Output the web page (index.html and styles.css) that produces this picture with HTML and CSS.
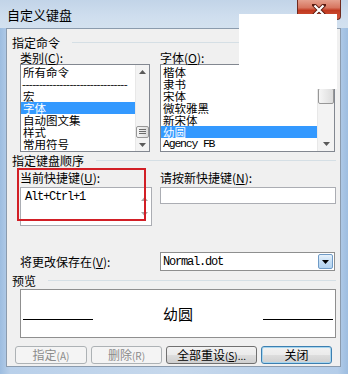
FILE: index.html
```html
<!DOCTYPE html>
<html lang="zh-CN">
<head>
    <meta charset="UTF-8">
    <title>自定义键盘</title>
    <link rel="stylesheet" href="styles.css">
</head>
<body>
    <div class="window">
        <div class="titlebar">
            <span class="title">自定义键盘</span>
            <div class="close-btn">
                <svg width="14" height="12" viewBox="0 0 14 12">
                    <path d="M2 1 L12 11 M12 1 L2 11" stroke="#5a1a10" stroke-width="4" stroke-linecap="square"/>
                    <path d="M2.5 1.5 L11.5 10.5 M11.5 1.5 L2.5 10.5" stroke="#fff" stroke-width="2.2"/>
                </svg>
            </div>
        </div>

        <div class="client">
            <div class="group-head"><span>指定命令</span><span class="rule"></span></div>

            <div class="cols">
                <div class="col-left">
                    <div class="label">类别(<u>C</u>):</div>
                    <div class="listbox list-left">
                        <ul class="items">
                            <li>所有命令</li>
                            <li class="dashes">-------------------------------</li>
                            <li>宏</li>
                            <li class="selected">字体</li>
                            <li>自动图文集</li>
                            <li>样式</li>
                            <li>常用符号</li>
                        </ul>
                        <div class="scrollbar">
                            <div class="arrow">
                                <svg width="7" height="4" viewBox="0 0 7 4"><path d="M0 4 L3.5 0 L7 4 Z" fill="#5a5a5a"/></svg>
                            </div>
                            <div class="thumb grip thumb-left">
                                <svg width="7" height="6" viewBox="0 0 7 6"><path d="M0 0.5 H7 M0 2.5 H7 M0 4.5 H7" stroke="#6b6b6b" stroke-width="1"/></svg>
                            </div>
                            <div class="arrow">
                                <svg width="7" height="4" viewBox="0 0 7 4"><path d="M0 0 L3.5 4 L7 0 Z" fill="#5a5a5a"/></svg>
                            </div>
                        </div>
                    </div>
                </div>
                <div class="col-right">
                    <div class="label">字体(<u>O</u>):</div>
                    <div class="listbox list-right">
                        <ul class="items">
                            <li>楷体</li>
                            <li>隶书</li>
                            <li>宋体</li>
                            <li>微软雅黑</li>
                            <li>新宋体</li>
                            <li class="selected">幼圆</li>
                            <li class="mono">Agency FB</li>
                        </ul>
                        <div class="scrollbar wide">
                            <div class="arrow up-big">
                                <svg width="7" height="4" viewBox="0 0 7 4"><path d="M0 4 L3.5 0 L7 4 Z" fill="#5a5a5a"/></svg>
                            </div>
                            <div class="thumb thumb-right"></div>
                            <div class="arrow down-big">
                                <svg width="7" height="4" viewBox="0 0 7 4"><path d="M0 0 L3.5 4 L7 0 Z" fill="#5a5a5a"/></svg>
                            </div>
                        </div>
                    </div>
                </div>
            </div>

            <div class="group-head head-gap"><span>指定键盘顺序</span><span class="rule"></span></div>

            <div class="cols row-gap">
                <div class="col-left">
                    <div class="label">当前快捷键(<u>U</u>):</div>
                    <div class="textbox">
                        <div class="mono text-pad">Alt+Ctrl+1</div>
                        <div class="scrollbar faint">
                            <div class="arrow">
                                <svg width="7" height="4" viewBox="0 0 7 4"><path d="M0 4 L3.5 0 L7 4 Z" fill="#a8a8a8"/></svg>
                            </div>
                            <div class="arrow">
                                <svg width="7" height="4" viewBox="0 0 7 4"><path d="M0 0 L3.5 4 L7 0 Z" fill="#a8a8a8"/></svg>
                            </div>
                        </div>
                    </div>
                    <div class="highlight-box"></div>
                </div>
                <div class="col-right">
                    <div class="label">请按新快捷键(<u>N</u>):</div>
                    <div class="input"></div>
                </div>
            </div>

            <div class="cols save-row">
                <div class="col-left save-label">将更改保存在(<u>V</u>):</div>
                <div class="col-right">
                    <div class="select">
                        <span class="mono">Normal.dot</span>
                        <span class="drop-btn">
                            <svg width="7" height="4" viewBox="0 0 7 4"><path d="M0 0 L3.5 4 L7 0 Z" fill="#000"/></svg>
                        </span>
                    </div>
                </div>
            </div>

            <div class="group-head head-gap3"><span>预览</span><span class="rule"></span></div>

            <div class="preview">
                <span class="pline"></span>
                <span class="ptext">幼圆</span>
                <span class="pline"></span>
            </div>

            <div class="buttons">
                <button class="btn disabled w72">指定<small>(A)</small></button>
                <button class="btn disabled">删除<small>(R)</small></button>
                <button class="btn w91">全部重设<small>(<u>S</u>)...</small></button>
                <button class="btn focused">关闭</button>
            </div>
        </div>

        <div class="mask"></div>
    </div>
</body>
</html>
```

FILE: styles.css
```css
/* Basic styling */
body {
    margin: 0;
    font-family: "Noto Sans CJK SC", "Liberation Sans", sans-serif;
    font-size: 12px;
    color: #000;
}
ul {
    list-style-type: none;
    margin: 0;
    padding: 0;
}
.mono {
    font-family: "Liberation Mono", "Noto Sans CJK SC", monospace;
    letter-spacing: -1.2px;
}
/* Window frame */
.window {
    position: relative;
    width: 348px;
    height: 374px;
    display: flex;
    flex-direction: column;
    overflow: hidden;
    background: linear-gradient(to right, #9dbde0 0%, #b9d0ea 3%, #c6d8ec 50%, #b4cde9 97%, #9dbde0 100%);
}
.titlebar {
    height: 28px;
    display: flex;
    justify-content: space-between;
    align-items: flex-start;
    background: linear-gradient(to bottom, #c2d4e8, #cfdeee 60%, #d3e1ef);
}
.title {
    font-size: 13px;
    line-height: 13px;
    margin: 8px 0 0 7px;
}
.close-btn {
    width: 44px;
    height: 20px;
    margin-right: 7px;
    box-sizing: border-box;
    border: 1px solid #6f2a1e;
    border-top: none;
    border-radius: 0 0 4px 4px;
    background: linear-gradient(to bottom, #e5a08e 0%, #d77660 40%, #c1391f 55%, #d3583e 100%);
    display: flex;
    align-items: center;
    justify-content: center;
    padding-top: 1px;
}
.client {
    flex: 1;
    margin: 0 7px 7px 6px;
    background-color: #f0f0f0;
    border: 1px solid #8b9bad;
    padding: 7px 4px 0 5px;
    display: flex;
    flex-direction: column;
}
.group-head {
    display: flex;
    align-items: center;
    gap: 12px;
    height: 13px;
    line-height: 13px;
}
.group-head .rule {
    flex: 1;
    height: 1px;
    background-color: #d5dfe5;
}
.head-gap {
    margin-top: 2px;
}
.head-gap3 {
    margin-top: 3px;
}
.cols {
    display: flex;
    gap: 8px;
    padding-left: 8px;
}
.col-left {
    width: 132px;
    position: relative;
}
.col-right {
    width: 176px;
}
.label {
    height: 13px;
    line-height: 13px;
    margin-top: 2px;
    white-space: nowrap;
}
/* List boxes */
.listbox {
    height: 88px;
    box-sizing: border-box;
    border: 1px solid #828790;
    background-color: #fff;
    display: flex;
}
.list-left {
    width: 130px;
}
.list-right {
    width: 175px;
}
.items {
    flex: 1;
    padding-top: 1px;
    min-width: 0;
}
.items li {
    height: 12px;
    line-height: 12px;
    font-size: 11.5px;
    padding-left: 2px;
    white-space: nowrap;
}
.items li.selected {
    background-color: #3399ff;
    color: #fff;
}
.items li.dashes {
    letter-spacing: -0.6px;
    padding-left: 1px;
}
.scrollbar {
    width: 13px;
    display: flex;
    flex-direction: column;
    justify-content: space-between;
    background-color: #f3f3f3;
    border-left: 1px solid #e8e8e8;
}
.scrollbar.wide {
    width: 16px;
    justify-content: flex-start;
}
.scrollbar.faint {
    background-color: #fff;
    border-left: none;
    padding: 4px 0 5px;
}
.arrow {
    height: 13px;
    display: flex;
    align-items: center;
    justify-content: center;
}
.up-big {
    height: 23px;
}
.down-big {
    height: 15px;
    margin-top: auto;
}
.thumb {
    box-sizing: border-box;
    border: 1px solid #979797;
    border-radius: 2px;
    background: linear-gradient(to right, #f6f6f6, #dcdcdc);
}
.grip {
    display: flex;
    align-items: center;
    justify-content: center;
}
.thumb-left {
    height: 12px;
    margin-top: auto;
}
.thumb-right {
    height: 16px;
}
/* Shortcut fields */
.row-gap {
    margin-top: 2px;
}
.textbox {
    margin-top: 3px;
    height: 39px;
    box-sizing: border-box;
    border: 1px solid #abadb3;
    background-color: #fff;
    display: flex;
}
.text-pad {
    flex: 1;
    padding: 3px 0 0 4px;
    line-height: 13px;
}
.highlight-box {
    position: absolute;
    left: -3px;
    top: -1px;
    width: 129px;
    height: 53px;
    box-sizing: border-box;
    border: 2px solid #d21f26;
}
.input {
    margin-top: 3px;
    height: 17px;
    box-sizing: border-box;
    border: 1px solid #abadb3;
    background-color: #fff;
}
.save-row {
    margin-top: 26px;
    height: 19px;
    align-items: center;
}
.save-label {
    line-height: 13px;
}
.select {
    width: 175px;
    height: 19px;
    box-sizing: border-box;
    border: 1px solid #8e8f8f;
    background-color: #fff;
    display: flex;
    align-items: center;
    justify-content: space-between;
    padding-left: 2px;
}
.drop-btn {
    width: 15px;
    height: 15px;
    margin-right: 1px;
    box-sizing: border-box;
    border: 1px solid #6f9bc7;
    border-radius: 2px;
    background: linear-gradient(to bottom, #e8f2fc, #c5def4 50%, #b3d3f0);
    display: flex;
    align-items: center;
    justify-content: center;
}
/* Preview */
.preview {
    margin: 2px 0 0 8px;
    width: 316px;
    height: 49px;
    box-sizing: border-box;
    border: 1px solid #8f8f8f;
    background-color: #fff;
    display: flex;
    align-items: center;
    justify-content: space-between;
    padding: 0 2px;
}
.pline {
    width: 70px;
    height: 1px;
    margin-top: 11px;
    background-color: #000;
}
.ptext {
    font-size: 15px;
    line-height: 16px;
}
/* Buttons */
.buttons {
    margin-top: 8px;
    padding-left: 3px;
    display: flex;
    gap: 4px;
}
.btn {
    width: 71px;
    height: 18px;
    padding: 0;
    font-family: "Noto Sans CJK SC", "Liberation Sans", sans-serif;
    font-size: 12px;
    line-height: 14px;
    color: #000;
    border: 1px solid #707070;
    border-radius: 3px;
    background: linear-gradient(to bottom, #f2f2f2 0%, #ebebeb 48%, #dddddd 52%, #cfcfcf 100%);
}
.btn small {
    font-size: 10px;
}
.w72 {
    width: 72px;
}
.w91 {
    width: 91px;
}
.btn.disabled {
    color: #8b8b8b;
    border-color: #adb2b5;
    background: #f4f4f4;
}
.btn.focused {
    border-color: #3c7fb1;
    box-shadow: inset 0 0 0 1px #a6d5ee;
}
/* white block over the top right corner */
.mask {
    position: absolute;
    left: 239px;
    top: 14px;
    width: 98px;
    height: 75px;
    background-color: #fff;
}
```
